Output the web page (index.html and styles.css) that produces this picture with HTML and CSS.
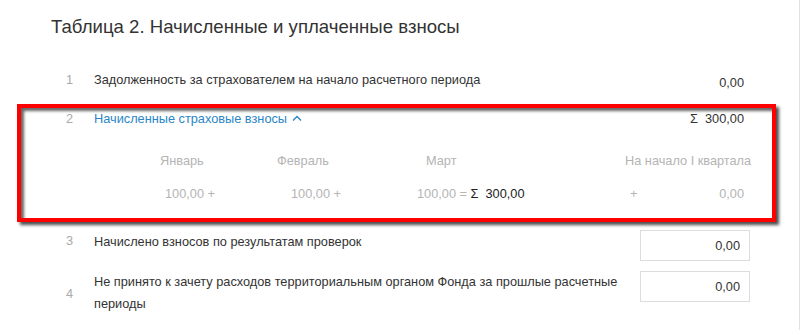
FILE: index.html
```html
<!DOCTYPE html>
<html>

<head>
    <meta charset="utf-8">
    <title>Таблица 2</title>
    <link rel="stylesheet" href="styles.css">
</head>

<body>
    <div class="page">
        <h1 class="title">Таблица 2. Начисленные и уплаченные взносы</h1>

        <div class="row row-first">
            <span class="num">1</span>
            <span class="label">Задолженность за страхователем на начало расчетного периода</span>
            <span class="value value-low">0,00</span>
        </div>

        <div class="mark">
            <div class="row">
                <span class="num">2</span>
                <span class="label">
                    <a class="toggle" href="#">Начисленные страховые взносы
                        <svg class="chevron" width="10" height="6" viewBox="0 0 10 6"><path d="M1 5.5 L5 1.5 L9 5.5" fill="none" stroke="#2a86c8" stroke-width="1.4"/></svg>
                    </a>
                </span>
                <span class="value">&Sigma;&nbsp; 300,00</span>
            </div>

            <div class="months">
                <span class="head">Январь</span>
                <span class="head">Февраль</span>
                <span class="head head-march">Март</span>
                <span class="head head-start">На начало I квартала</span>

                <span class="sum sum-jan">100,00 +</span>
                <span class="sum sum-feb">100,00 +</span>
                <span class="sum">100,00 = <b class="total">&Sigma;&nbsp; 300,00</b></span>
                <span class="sum sum-start"><i class="plus">+</i>0,00</span>
            </div>
        </div>

        <div class="row row-input">
            <span class="num">3</span>
            <span class="label">Начислено взносов по результатам проверок</span>
            <span class="field">0,00</span>
        </div>

        <div class="row row-input row-two">
            <span class="num">4</span>
            <span class="label">Не принято к зачету расходов территориальным органом Фонда за прошлые расчетные периоды</span>
            <span class="field">0,00</span>
        </div>
    </div>
</body>

</html>
```

FILE: styles.css
```css
* {
    margin: 0;
    padding: 0;
    box-sizing: border-box;
}

body {
    background-color: white;
    font-family: "Liberation Sans", Arial, sans-serif;
    font-size: 12.75px;
    color: #333;
}

.page {
    width: 800px;
    height: 330px;
    border-right: 1px solid #e2e2e2;
}

.title {
    font-size: 18.6px;
    font-weight: normal;
    line-height: 22px;
    padding: 16px 0 0 51px;
    color: #333;
}

.row {
    display: flex;
    align-items: center;
    line-height: 20px;
    padding: 0 49px 0 66px;
}

.row-first {
    margin-top: 32px;
}

.num {
    width: 28px;
    flex-shrink: 0;
    color: #aaa;
}

.label {
    flex: 1;
}

.value {
    padding-right: 6px;
}
.value-low {
    position: relative;
    top: 3px;
}

/* red annotation frame */
.mark {
    margin: 14px 23px 0 17px;
    border: 4px solid #ff0000;
    padding: 1px 0 14px 0;
    box-shadow: 3px 3px 3px rgba(0, 0, 0, 0.7), inset 3px 3px 3px rgba(0, 0, 0, 0.6);
}

.mark .row {
    padding: 0 22px 0 45px;
}

.toggle {
    color: #2a86c8;
    text-decoration: none;
}
.chevron {
    vertical-align: 2px;
    margin-left: 1px;
}

.months {
    display: grid;
    grid-template-columns: 117px 140px 208px 125px;
    grid-template-rows: 20px 20px;
    row-gap: 13px;
    margin: 22px 0 0 139px;
    line-height: 20px;
    color: #b4b4b4;
    white-space: nowrap;
}

.head-march {
    padding-left: 9px;
}

.sum-jan {
    padding-left: 5px;
}
.sum-feb {
    padding-left: 14px;
}
.total {
    font-weight: normal;
    color: #222;
}
.sum-start {
    display: flex;
    justify-content: space-between;
    padding: 0 6px 0 5px;
}
.plus {
    font-style: normal;
}

.row-input {
    align-items: flex-start;
    line-height: 22px;
    margin-top: 8px;
}
.row-input .label {
    padding-top: 1px;
}

.field {
    width: 110px;
    height: 31px;
    flex-shrink: 0;
    margin-left: 8px;
    border: 1px solid #dcdcdc;
    text-align: right;
    padding: 4px 9px 0 0;
}

.row-two {
    margin-top: 10px;
}
.row-two .num {
    align-self: center;
    padding-top: 2px;
}
.row-two .label {
    padding-top: 0;
}
```
